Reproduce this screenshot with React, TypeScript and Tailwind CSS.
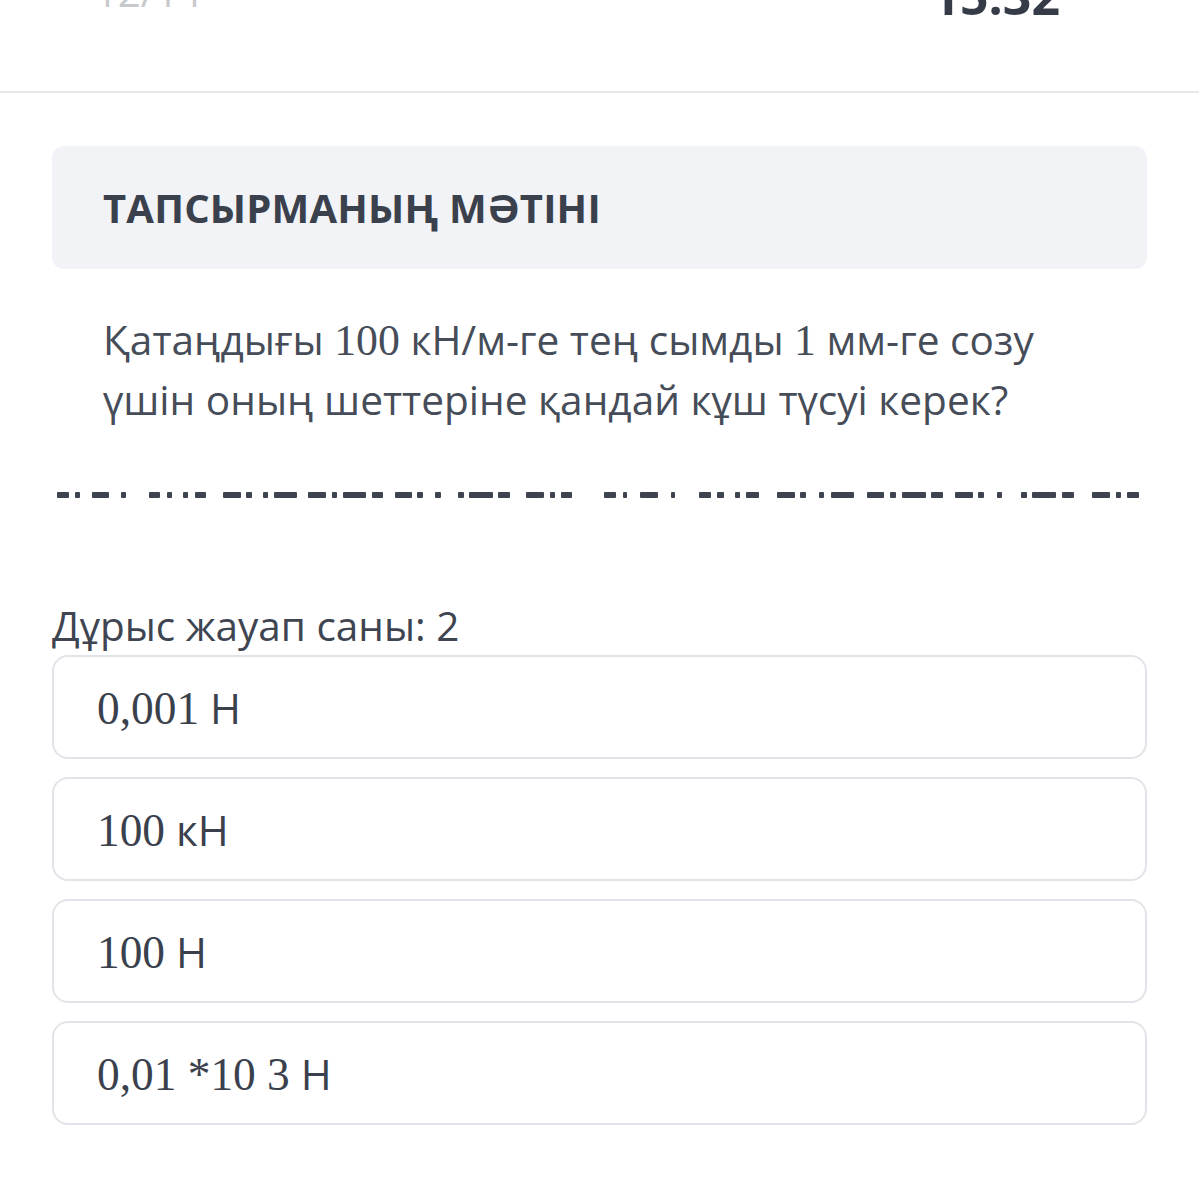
const leftDashes: [number, number][] = [
  [57, 69], [75, 80], [92, 109], [121, 126],
  [149, 160], [167, 172], [183, 188], [195, 206],
  [223, 241], [246, 252], [263, 268], [274, 297], [308, 326], [332, 337], [343, 366], [372, 383],
  [395, 412], [417, 423], [435, 441], [458, 464], [469, 493], [498, 510],
  [526, 544], [550, 555], [561, 572],
]

const rightDashes: [number, number][] = [
  [604, 616], [623, 627], [640, 658], [671, 675],
  [699, 711], [717, 724], [735, 740], [746, 759],
  [777, 795], [800, 806], [819, 824], [831, 854], [867, 884], [890, 896], [902, 926], [931, 943],
  [955, 973], [978, 984], [997, 1002], [1021, 1027], [1032, 1056], [1062, 1074],
  [1092, 1110], [1116, 1121], [1127, 1139],
]

const answers = [
  { num: "0,001", unit: "Н" },
  { num: "100", unit: "кН" },
  { num: "100", unit: "Н" },
  { num: "0,01 *10 3", unit: "Н" },
]

const Num = ({ children }: { children: string }) => (
  <span className="font-['Liberation_Serif',serif] text-[1.08em] leading-none">{children}</span>
)

export default function App() {
  return (
    <div className="w-[1199px] h-[1200px] overflow-hidden bg-white font-['Open_Sans','Noto_Sans',sans-serif] text-[#3b4250]">
      {/* Top bar, cut off at the top edge */}
      <div className="h-[93px] border-b-2 border-[#e6e8eb] flex justify-between pl-[95px] pr-[139px] overflow-hidden">
        <span className="text-[40px] leading-none -mt-[28px] text-[#c7c9cc]">12/14</span>
        <span className="text-[50px] leading-none font-bold -mt-[29px] text-[#353c48]">15:32</span>
      </div>

      <div className="px-[52px]">
        {/* Header */}
        <div className="mt-[53px] h-[123px] rounded-[12px] bg-[#f1f3f6] flex items-center pl-[51px]">
          <h2 className="text-[40px] font-bold text-[#3a414d] tracking-[0.2px]">ТАПСЫРМАНЫҢ МӘТІНІ</h2>
        </div>

        {/* Question */}
        <p className="mt-[41px] pl-[51px] pr-[45px] text-[40.6px] leading-[60px] text-[#464d58]">
          Қатаңдығы <Num>100</Num> кН/м-ге тең сымды <Num>1</Num> мм-ге созу үшін оның шеттеріне қандай кұш түсуі керек?
        </p>
      </div>

      {/* Dashed marker line */}
      <svg width="1199" height="6" className="block mt-[62px]">
        {[...leftDashes, ...rightDashes].map(([a, b], i) => (
          <rect key={i} x={a} y={0} width={b - a} height={6} rx={1} fill="#3d4450" />
        ))}
      </svg>

      <div className="px-[52px]">
        <p className="mt-[104px] text-[40.5px] leading-[48px] text-[#3e4551]">Дұрыс жауап саны: 2</p>

        <div className="mt-[5px] flex flex-col gap-[18px]">
          {answers.map((a, i) => (
            <div
              key={i}
              className="h-[104px] rounded-[16px] border-2 border-[#e1e4e8] flex items-center pl-[43px] text-[42px] text-[#3a414d]"
            >
              <span>
                <Num>{a.num}</Num> {a.unit}
              </span>
            </div>
          ))}
        </div>
      </div>
    </div>
  )
}
